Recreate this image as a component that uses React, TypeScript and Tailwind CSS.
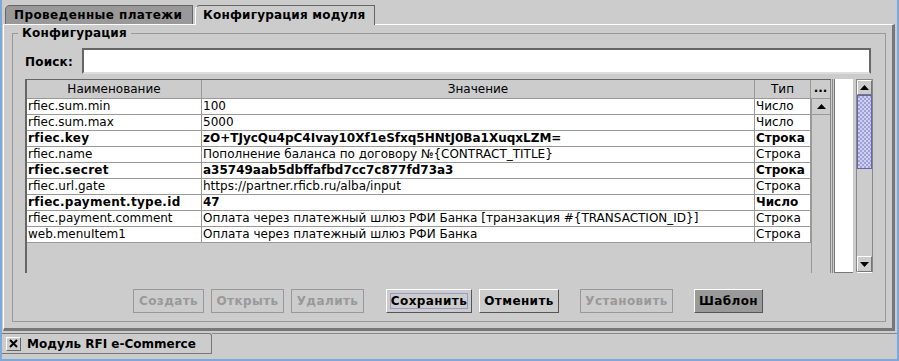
const rows = [
  { name: 'rfiec.sum.min', value: '100', type: 'Число', bold: false },
  { name: 'rfiec.sum.max', value: '5000', type: 'Число', bold: false },
  { name: 'rfiec.key', value: 'zO+TJycQu4pC4Ivay10Xf1eSfxq5HNtJ0Ba1XuqxLZM=', type: 'Строка', bold: true },
  { name: 'rfiec.name', value: 'Пополнение баланса по договору №{CONTRACT_TITLE}', type: 'Строка', bold: false },
  { name: 'rfiec.secret', value: 'a35749aab5dbffafbd7cc7c877fd73a3', type: 'Строка', bold: true },
  { name: 'rfiec.url.gate', value: 'https://partner.rficb.ru/alba/input', type: 'Строка', bold: false },
  { name: 'rfiec.payment.type.id', value: '47', type: 'Число', bold: true },
  { name: 'rfiec.payment.comment', value: 'Оплата через платежный шлюз РФИ Банка [транзакция #{TRANSACTION_ID}]', type: 'Строка', bold: false },
  { name: 'web.menuItem1', value: 'Оплата через платежный шлюз РФИ Банка', type: 'Строка', bold: false },
];

const ArrowUp = () => (
  <svg width="9" height="5" viewBox="0 0 9 5">
    <polygon points="0,5 9,5 4.5,0" fill="#000" />
  </svg>
);

const ArrowDown = () => (
  <svg width="9" height="5" viewBox="0 0 9 5">
    <polygon points="0,0 9,0 4.5,5" fill="#000" />
  </svg>
);

const Btn = ({ label, kind, className }: { label: string; kind: 'off' | 'on' | 'focus' | 'dark'; className?: string }) => {
  const base = 'h-[24px] flex items-center justify-center font-bold text-[12px] tracking-[0.4px] ';
  if (kind === 'off')
    return <div className={base + 'border border-[#999] text-[#999] ' + (className ?? '')}>{label}</div>;
  if (kind === 'dark')
    return (
      <div className={base + 'border border-t-white border-l-white border-b-[#555] border-r-[#555] bg-[#999] text-black ' + (className ?? '')}>
        {label}
      </div>
    );
  return (
    <div className={base + 'border border-t-white border-l-white border-b-[#555] border-r-[#555] text-black p-[3px] ' + (className ?? '')}>
      <div className={'w-full h-full flex items-center justify-center ' + (kind === 'focus' ? 'border border-[#9999cc]' : '')}>
        {label}
      </div>
    </div>
  );
};

export default function App() {
  return (
    <div className="w-[899px] h-[361px] overflow-hidden bg-[#cccccc] border-l-2 border-r-2 border-b-2 border-[#7ea8d8] font-['DejaVu_Sans',sans-serif] text-[12px] text-black flex flex-col">
      {/* Tabs */}
      <div className="mt-[5px] h-[19px] flex items-end pl-[3px]">
        <div className="h-[19px] w-[188px] bg-[#999999] border-t border-l border-r border-[#666] rounded-tl-[5px] flex items-center pl-[8px] font-bold tracking-[0.4px]">
          Проведенные платежи
        </div>
        <div className="relative z-10 h-[20px] -mb-px w-[180px] ml-[2px] bg-[#cccccc] border-t border-l border-r border-t-[#666] border-r-[#666] border-l-white rounded-tl-[5px] flex items-center pl-[7px] pb-px font-bold tracking-[0.2px]">
          Конфигурация модуля
        </div>
      </div>

      {/* Tab panel */}
      <div className="ml-[1px] w-[892px] h-[307px] border-t border-l border-t-white border-l-white border-r-[3px] border-b-[3px] border-r-[#777] border-b-[#777] pt-[8px] pl-[8px]">
        {/* Group box */}
        <div className="relative w-[874px] h-[289px] border border-[#999] flex flex-col">
          <span className="absolute -top-[9px] left-[5px] px-[4px] bg-[#cccccc] font-bold tracking-[0.2px] leading-[16px]">
            Конфигурация
          </span>

          {/* Search */}
          <div className="mt-[14px] h-[26px] pl-[12px] flex items-center">
            <span className="w-[57px] font-bold tracking-[0.2px] pt-[2px]">Поиск:</span>
            <div className="w-[789px] h-[26px] bg-white border-2 border-t-[#666] border-l-[#666] border-b-[#ddd] border-r-[#666]" />
          </div>

          {/* Table area */}
          <div className="mt-[5px] ml-[12px] h-[194px] flex">
            <div className="w-[806px] h-full border-t border-l-2 border-[#666] flex">
              <div className="flex flex-col">
                <div className="flex h-[19px]">
                  <div className="w-[175px] border-r border-b border-[#999] flex items-center justify-center">Наименование</div>
                  <div className="w-[553px] border-r border-b border-[#999] flex items-center justify-center">Значение</div>
                  <div className="w-[56px] border-r border-b border-[#999] flex items-center justify-center">Тип</div>
                </div>
                {rows.map((r) => (
                  <div key={r.name} className={'flex h-[16px] leading-[15px] ' + (r.bold ? 'font-bold' : '')}>
                    <div className={'w-[175px] bg-white border-r border-b border-[#999] pl-px whitespace-nowrap overflow-hidden ' + (r.bold ? 'tracking-[0.3px]' : '')}>{r.name}</div>
                    <div className="w-[553px] bg-white border-r border-b border-[#999] pl-px whitespace-nowrap overflow-hidden">{r.value}</div>
                    <div className="w-[56px] bg-white border-r border-b border-[#999] pl-px whitespace-nowrap overflow-hidden">{r.type}</div>
                  </div>
                ))}
              </div>
              {/* inner column */}
              <div className="w-[20px] flex flex-col border-r border-[#888]">
                <div className="h-[19px] border-b border-[#999] flex items-center justify-center font-bold leading-none pb-[2px]">...</div>
                <div className="h-[16px] border-l border-[#999] bg-[#cccccc] flex items-center justify-center border-b border-t-white">
                  <ArrowUp />
                </div>
                <div className="flex-1 border-l border-[#999]" />
              </div>
            </div>
            {/* side list */}
            <div className="ml-[1px] w-[23px] h-full border-l border-r-2 border-l-[#888] border-r-[#ccc] flex">
              <div className="ml-[1px] w-[20px] h-full bg-white border-l border-b border-[#777]" />
            </div>
            {/* scrollbar */}
            <div className="ml-[1px] w-[17px] h-full border border-[#888] border-b-white flex flex-col">
              <div className="h-[15px] border border-t-white border-l-white border-b-[#777] border-r-[#777] flex items-center justify-center">
                <ArrowUp />
              </div>
              <div className="h-[74px] border border-[#6666aa] bg-[repeating-conic-gradient(#d0d0f4_0%_25%,#a0a0d8_0%_50%)] bg-[length:4px_4px]" />
              <div className="flex-1" />
              <div className="h-[16px] border border-t-white border-l-white border-b-[#777] border-r-[#777] flex items-center justify-center">
                <ArrowDown />
              </div>
            </div>
          </div>

          {/* Buttons */}
          <div className="mt-[16px] flex items-center pl-[120px]">
            <Btn label="Создать" kind="off" className="w-[71px]" />
            <Btn label="Открыть" kind="off" className="w-[73px] ml-[7px]" />
            <Btn label="Удалить" kind="off" className="w-[73px] ml-[7px]" />
            <Btn label="Сохранить" kind="focus" className="w-[86px] ml-[22px]" />
            <Btn label="Отменить" kind="on" className="w-[80px] ml-[7px]" />
            <Btn label="Установить" kind="off" className="w-[93px] ml-[21px]" />
            <Btn label="Шаблон" kind="dark" className="w-[69px] ml-[21px]" />
          </div>
        </div>
      </div>

      {/* Bottom tab strip */}
      <div className="mt-[2px] h-[21px] flex items-start">
        <div className="h-[21px] w-[210px] border-t border-r border-b border-[#777] border-t-[#777] rounded-tr-[3px] flex items-center pl-[4px]">
          <div className="w-[15px] h-[14px] border border-t-white border-l-white border-b-[#666] border-r-[#666] flex items-center justify-center">
            <svg width="9" height="9" viewBox="0 0 9 9">
              <path d="M1 1 L8 8 M8 1 L1 8" stroke="#000" strokeWidth="2" />
            </svg>
          </div>
          <span className="ml-[6px] font-bold">Модуль RFI e-Commerce</span>
        </div>
        <div className="flex-1 border-t border-[#888]" />
      </div>
    </div>
  );
}
